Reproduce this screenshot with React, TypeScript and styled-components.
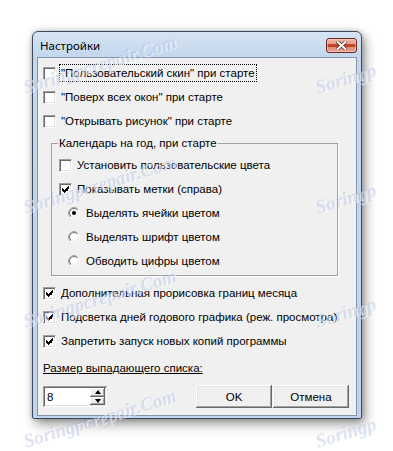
import React from "react";
import styled, { createGlobalStyle } from "styled-components";

const Global = createGlobalStyle`
  html, body { margin: 0; padding: 0; background: #ffffff; width: 393px; height: 451px; overflow: hidden; }
  #root { width: 393px; height: 451px; overflow: hidden; }
`;

const Page = styled.div`
  position: relative;
  width: 393px;
  height: 451px;
  box-sizing: border-box;
  padding: 31px 0 0 32px;
  overflow: hidden;
  font-family: "Liberation Sans", Arial, sans-serif;
  font-size: 11.5px;
  color: #000;
`;

const Window = styled.div`
  width: 330px;
  height: 388px;
  box-sizing: border-box;
  border: 1px solid #3b4a5c;
  border-radius: 6px 6px 2px 2px;
  background: linear-gradient(180deg, #d6e4f4 0px, #c4d7ed 24px, #c0d4eb 100%);
  box-shadow: 3px 5px 12px rgba(0, 0, 0, 0.42), 0 0 5px rgba(0, 0, 0, 0.22);
  display: flex;
  flex-direction: column;
  padding: 0 4px 2px 4px;
`;

const TitleBar = styled.div`
  height: 25px;
  display: flex;
  justify-content: space-between;
  align-items: flex-start;
  padding-left: 3px;
`;

const Title = styled.span`
  margin-top: 6px;
  line-height: 16px;
  font-family: "Noto Sans", "Open Sans", sans-serif;
  font-size: 11.5px;
  color: #000;
`;

const CloseButton = styled.div`
  margin-top: 6px;
  width: 31px;
  height: 15px;
  box-sizing: border-box;
  border: 1px solid #6b2a22;
  border-radius: 3px;
  background: linear-gradient(
    180deg,
    #efb8a8 0px,
    #e39c86 5px,
    #c9462e 5px,
    #c24028 8px,
    #dc8a73 8px,
    #e9a692 100%
  );
  box-shadow: inset 0 0 0 1px rgba(255, 220, 210, 0.5);
  display: flex;
  align-items: center;
  justify-content: center;
`;

const Client = styled.div`
  height: 359px;
  box-sizing: border-box;
  border: 1px solid #8196ad;
  background: #f0f0f0;
  display: flex;
  flex-direction: column;
`;

const Section = styled.div<{ $top?: number }>`
  display: flex;
  flex-direction: column;
  padding-left: 5px;
  margin-top: ${(p) => p.$top ?? 0}px;
`;

const Row = styled.label<{ $indent?: number }>`
  height: 24px;
  display: flex;
  align-items: center;
  gap: 5px;
  padding-left: ${(p) => p.$indent ?? 0}px;
  white-space: nowrap;
  line-height: 14px;
`;

const RadioRow = styled(Row)`
  gap: 6px;
`;

const Box = styled.span`
  width: 13px;
  height: 13px;
  box-sizing: border-box;
  flex: none;
  background: #fff;
  border: 1px solid;
  border-color: #a0a0a0 #ffffff #ffffff #a0a0a0;
  box-shadow: inset 1px 1px 0 #696969, inset -1px -1px 0 #e3e3e3;
  display: flex;
  align-items: center;
  justify-content: center;
`;

const FocusText = styled.span`
  border: 1px dotted #000;
  padding: 1px 1px;
  margin-left: -2px;
`;

const Group = styled.fieldset`
  margin: 3px 18px 0 13px;
  padding: 3px 0 2px 7px;
  border: 1px solid #a0a0a0;
  box-shadow: 1px 1px 0 #ffffff;
  min-width: 0;
  display: flex;
  flex-direction: column;
`;

const Legend = styled.legend`
  padding: 0 1px;
  margin-left: -1px;
  line-height: 14px;
  font-size: 11.5px;
`;

const SizeLabel = styled.div`
  height: 24px;
  margin-top: 3px;
  padding-left: 5px;
  display: flex;
  align-items: center;
  text-decoration: underline;
  line-height: 14px;
`;

const BottomBar = styled.div`
  display: flex;
  align-items: flex-start;
  padding: 5px 7px 0 5px;
`;

const Spin = styled.div`
  margin-top: 1px;
  width: 64px;
  height: 21px;
  box-sizing: border-box;
  background: #fff;
  box-shadow: inset 1px 1px 0 #a0a0a0, inset -1px -1px 0 #ffffff, inset 2px 2px 0 #696969,
    inset -2px -2px 0 #e3e3e3;
  display: flex;
  align-items: center;
  justify-content: space-between;
  padding: 2px 2px 2px 4px;
`;

const SpinValue = styled.span`
  line-height: 14px;
`;

const SpinButtons = styled.div`
  display: flex;
  flex-direction: column;
  width: 15px;
  height: 17px;
`;

const SpinBtn = styled.div<{ $down?: boolean }>`
  flex: 1;
  background: #f0f0f0;
  box-shadow: inset -1px -1px 0 #696969, inset 1px 1px 0 #ffffff, inset -2px -2px 0 #a0a0a0;
  display: flex;
  align-items: center;
  justify-content: center;
  &::after {
    content: "";
    width: 0;
    height: 0;
    border-left: 3.5px solid transparent;
    border-right: 3.5px solid transparent;
    ${(p) => (p.$down ? "border-top: 4px solid #000;" : "border-bottom: 4px solid #000;")}
    margin-top: ${(p) => (p.$down ? "0" : "-1px")};
  }
`;

const Button = styled.div`
  width: 76px;
  height: 23px;
  box-sizing: border-box;
  background: #f0f0f0;
  box-shadow: inset -1px -1px 0 #696969, inset 1px 1px 0 #ffffff, inset -2px -2px 0 #a0a0a0,
    inset 2px 2px 0 #e3e3e3;
  display: flex;
  align-items: center;
  justify-content: center;
  line-height: 14px;
`;

const Buttons = styled.div`
  margin-left: auto;
  display: flex;
  gap: 1px;
`;

const Marks = styled.div`
  position: absolute;
  inset: 0;
  pointer-events: none;
`;

const Mark = styled.span<{ $x: number; $y: number }>`
  position: absolute;
  left: ${(p) => p.$x}px;
  top: ${(p) => p.$y}px;
  transform-origin: 0 50%;
  transform: translateY(-50%) rotate(-17deg);
  font-family: "Liberation Serif", serif;
  font-weight: bold;
  font-style: italic;
  font-size: 19px;
  white-space: nowrap;
  color: rgba(140, 158, 215, 0.3);
  text-shadow: 1px 1px 0 rgba(255, 255, 255, 0.6);
`;

const Check = () => (
  <svg width="7" height="7" viewBox="0 0 7 7" shapeRendering="crispEdges">
    <path d="M6 0h1v3h-1zM5 1h1v4h-1zM4 2h1v3h-1zM3 3h1v3h-1zM2 4h1v3h-1zM1 3h1v3h-1zM0 2h1v3h-1z" fill="#000" />
  </svg>
);

const Radio = ({ on }: { on?: boolean }) => (
  <svg width="12" height="12" viewBox="0 0 12 12" style={{ flex: "none" }}>
    <defs>
      <linearGradient id="ro" x1="0" y1="0" x2="1" y2="1">
        <stop offset="0.5" stopColor="#a0a0a0" />
        <stop offset="0.5" stopColor="#ffffff" />
      </linearGradient>
      <linearGradient id="ri" x1="0" y1="0" x2="1" y2="1">
        <stop offset="0.5" stopColor="#696969" />
        <stop offset="0.5" stopColor="#e3e3e3" />
      </linearGradient>
    </defs>
    <circle cx="6" cy="6" r="5.5" fill="#fff" stroke="url(#ro)" strokeWidth="1" />
    <circle cx="6" cy="6" r="4.5" fill="#fff" stroke="url(#ri)" strokeWidth="1" />
    {on && <circle cx="6" cy="6" r="2" fill="#000" />}
  </svg>
);

const CheckBox = ({ on }: { on?: boolean }) => <Box>{on && <Check />}</Box>;

const CloseX = () => (
  <svg width="11" height="9" viewBox="0 0 11 9">
    <path d="M1.5 1 L9.5 8 M9.5 1 L1.5 8" stroke="#5a2a24" strokeWidth="3.4" strokeLinecap="square" />
    <path d="M1.5 1 L9.5 8 M9.5 1 L1.5 8" stroke="#ffffff" strokeWidth="2" strokeLinecap="square" />
  </svg>
);

const markRows = [88, 208, 322, 442];

export default function App() {
  return (
    <>
      <Global />
      <Page>
        <Window>
          <TitleBar>
            <Title>Настройки</Title>
            <CloseButton>
              <CloseX />
            </CloseButton>
          </TitleBar>
          <Client>
            <Section $top={3}>
              <Row>
                <CheckBox />
                <FocusText>"Пользовательский скин" при старте</FocusText>
              </Row>
              <Row>
                <CheckBox />
                <span>"Поверх всех окон" при старте</span>
              </Row>
              <Row>
                <CheckBox />
                <span>"Открывать рисунок" при старте</span>
              </Row>
            </Section>
            <Group>
              <Legend>Календарь на год, при старте</Legend>
              <Row>
                <CheckBox />
                <span>Установить пользовательские цвета</span>
              </Row>
              <Row>
                <CheckBox on />
                <span>Показывать метки (справа)</span>
              </Row>
              <RadioRow $indent={9}>
                <Radio on />
                <span>Выделять ячейки цветом</span>
              </RadioRow>
              <RadioRow $indent={9}>
                <Radio />
                <span>Выделять шрифт цветом</span>
              </RadioRow>
              <RadioRow $indent={9}>
                <Radio />
                <span>Обводить цифры цветом</span>
              </RadioRow>
            </Group>
            <Section $top={5}>
              <Row>
                <CheckBox on />
                <span>Дополнительная прорисовка границ месяца</span>
              </Row>
              <Row>
                <CheckBox on />
                <span>Подсветка дней годового графика (реж. просмотра)</span>
              </Row>
              <Row>
                <CheckBox on />
                <span>Запретить запуск новых копий программы</span>
              </Row>
            </Section>
            <SizeLabel>Размер выпадающего списка:</SizeLabel>
            <BottomBar>
              <Spin>
                <SpinValue>8</SpinValue>
                <SpinButtons>
                  <SpinBtn />
                  <SpinBtn $down />
                </SpinButtons>
              </Spin>
              <Buttons>
                <Button>OK</Button>
                <Button>Отмена</Button>
              </Buttons>
            </BottomBar>
          </Client>
        </Window>
        <Marks>
          {markRows.map((y) => (
            <React.Fragment key={y}>
              <Mark $x={24} $y={y}>Soringpcrepair.Com</Mark>
              <Mark $x={316} $y={y}>Soringp</Mark>
            </React.Fragment>
          ))}
        </Marks>
      </Page>
    </>
  );
}
